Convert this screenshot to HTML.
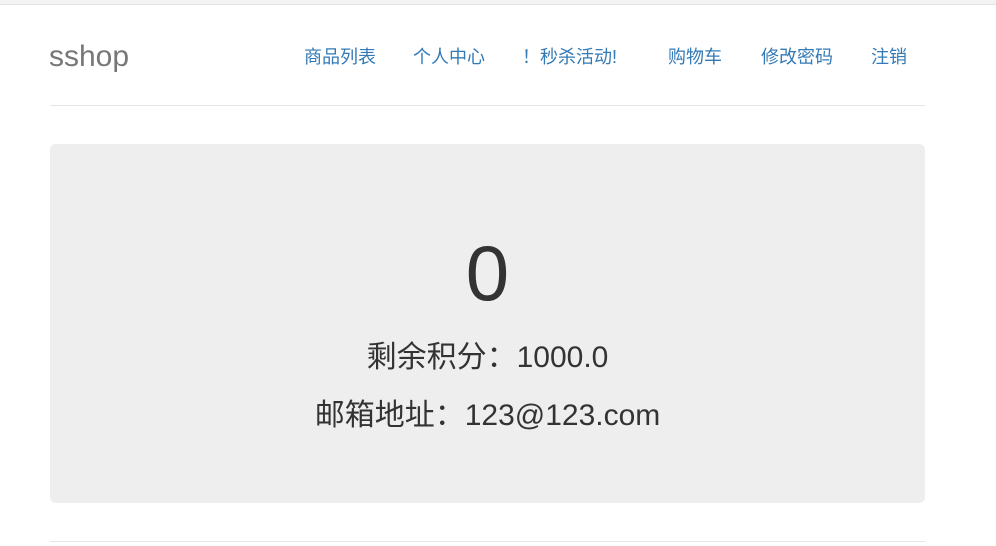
<!DOCTYPE html>
<html><head><meta charset="utf-8"><style>
body{margin:0;width:996px;height:546px;background:#fff;font-family:"Liberation Sans","Noto Sans CJK SC",sans-serif;position:relative;overflow:hidden}
.top{position:absolute;left:0;top:0;width:996px;height:4px;background:#f3f3f3;border-bottom:1px solid #e4e4e4}
.brand{position:absolute;left:49px;top:40px;font-size:30px;color:#777}
.nav a{position:absolute;top:43px;font-size:18px;color:#337ab7;text-decoration:none;white-space:nowrap}
.hr{position:absolute;left:50px;width:875px;height:1px;background:#e5e5e5}
.jumbo{position:absolute;left:50px;top:144px;width:875px;height:359px;background:#eee;border-radius:6px;text-align:center;color:#333}
.big{position:absolute;left:0;right:0;top:84px;font-size:78px;line-height:90px}
.l1{position:absolute;left:0;right:0;top:195px;font-size:30px;line-height:38px}
.l2{position:absolute;left:0;right:0;top:253px;font-size:30px;line-height:38px}
</style></head><body>
<div class="top"></div>
<div class="brand">sshop</div>
<div class="nav">
<a style="left:304px">商品列表</a>
<a style="left:413px">个人中心</a>
<a style="left:522px">！秒杀活动!</a>
<a style="left:668px">购物车</a>
<a style="left:761px">修改密码</a>
<a style="left:871px">注销</a>
</div>
<div class="hr" style="top:105px"></div>
<div class="jumbo">
<div class="big">0</div>
<div class="l1">剩余积分：1000.0</div>
<div class="l2">邮箱地址：123@123.com</div>
</div>
<div class="hr" style="top:541px"></div>
</body></html>
